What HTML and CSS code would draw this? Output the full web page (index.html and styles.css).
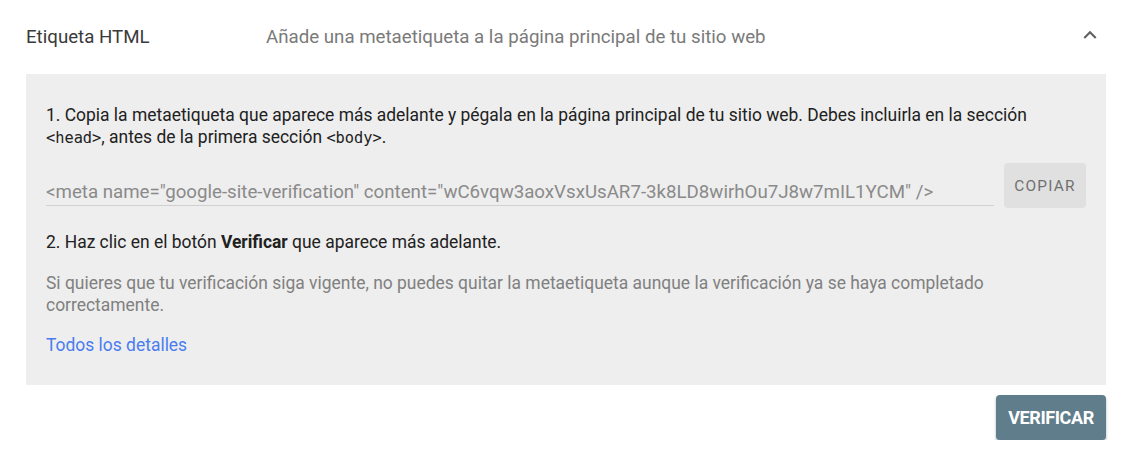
FILE: index.html
```html
<!DOCTYPE html>
<html lang="es">
<head>
<meta charset="UTF-8">
<meta name="viewport" content="width=device-width, initial-scale=1.0">
<title>Etiqueta HTML</title>
<link rel="stylesheet" href="styles.css">
</head>
<body>
<div class="method">
  <div class="method-header">
    <div class="method-name">Etiqueta HTML</div>
    <div class="method-desc">Añade una metaetiqueta a la página principal de tu sitio web</div>
    <svg class="chevron" width="26" height="26" viewBox="0 0 24 24"><path d="M7.41 15.41L12 10.83l4.59 4.58L18 14l-6-6-6 6z" fill="#616161"/></svg>
  </div>

  <div class="method-body">
    <p class="step">1. Copia la metaetiqueta que aparece más adelante y pégala en la página principal de tu sitio web. Debes incluirla en la sección <code>&lt;head&gt;</code>, antes de la primera sección <code>&lt;body&gt;</code>.</p>

    <div class="copy-row">
      <div class="meta-field">&lt;meta name="google-site-verification" content="wC6vqw3aoxVsxUsAR7-3k8LD8wirhOu7J8w7mIL1YCM" /&gt;</div>
      <button class="copy-btn">COPIAR</button>
    </div>

    <p class="step step-two">2. Haz clic en el botón <strong>Verificar</strong> que aparece más adelante.</p>

    <p class="note">Si quieres que tu verificación siga vigente, no puedes quitar la metaetiqueta aunque la verificación ya se haya completado correctamente.</p>

    <a class="details" href="#">Todos los detalles</a>
  </div>

  <div class="actions">
    <button class="verify-btn">VERIFICAR</button>
  </div>
</div>
</body>
</html>
```

FILE: styles.css
```css
body { margin: 0; font-family: Roboto, "Noto Sans", Arial, sans-serif; color: #212121; background: #fff; }
.method { width: 1080px; margin-left: 26px; }

/* Header row */
.method-header { display: flex; align-items: center; height: 74px; font-size: 18.7px; }
.method-name { width: 240px; color: #3a3a3a; }
.method-desc { flex: 1; color: #7a7a7a; }
.chevron { margin-right: 3px; margin-top: -4px; }

/* Expanded panel */
.method-body {
  background-color: #eeeeee;
  padding: 30px 20px 29px 20px;
  font-size: 17.45px;
  line-height: 22px;
}
.step { margin: 0; color: #212121; }
.step code { font-family: "DejaVu Sans Mono", "Liberation Mono", monospace; font-size: 15.3px; line-height: 1; }
.step strong { font-weight: 700; }

.copy-row { display: flex; align-items: flex-start; margin-top: 15px; }
.meta-field {
  flex: 1;
  height: 42px;
  line-height: 58px;
  font-size: 18.7px;
  color: #8a8a8a;
  border-bottom: 1px solid #d0d0d0;
  white-space: nowrap;
  overflow: hidden;
  margin-right: 10px;
}
.copy-btn {
  width: 82px;
  height: 45px;
  border: none;
  border-radius: 4px;
  background: #e0e0e0;
  color: #707070;
  font-family: inherit;
  font-size: 15.4px;
  font-weight: 400;
  letter-spacing: 1.2px;
  padding: 0;
}

.step-two { margin-top: 23px; }
.note { margin: 19px 0 0 0; color: #808080; }
.details { display: inline-block; margin-top: 18px; color: #4a7cf0; text-decoration: none; }

/* Bottom action */
.actions { display: flex; justify-content: flex-end; margin-top: 10px; }
.verify-btn {
  width: 110px;
  height: 45px;
  border: none;
  border-radius: 4px;
  background: #607d8b;
  color: #fff;
  font-family: inherit;
  font-size: 18px;
  font-weight: 700;
  letter-spacing: -0.4px;
  padding: 0;
  box-shadow: 0 2px 3px rgba(0, 0, 0, 0.3);
}
```
